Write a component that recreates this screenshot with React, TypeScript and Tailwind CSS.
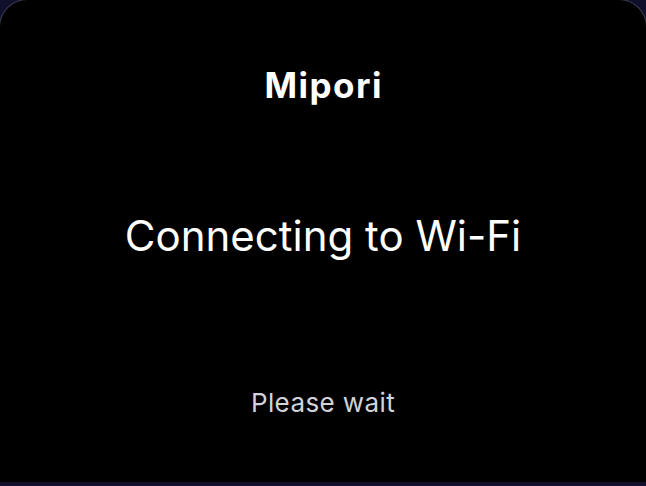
import React from "react";

export default function App() {
  return (
    <div className="w-[646px] h-[486px] bg-[#10102a] overflow-hidden" style={{ fontFamily: "Inter, 'Noto Sans', sans-serif" }}>
      <div className="w-[648px] h-[483px] -ml-px -mt-px bg-black rounded-t-[28px] border border-b-0 border-[#3a3d52] flex flex-col items-center">
        <div className="mt-[64px] h-[42px] leading-[42px] text-[35px] font-bold tracking-[1.5px] pl-[1.5px] text-white">Mipori</div>
        <div className="mt-[106px] h-[48px] leading-[48px] text-[42px] font-normal text-white">Connecting to Wi-Fi</div>
        <div className="mt-[128px] h-[30px] leading-[30px] text-[26px] font-normal tracking-[0.4px] text-[#d1d3da]">Please wait</div>
      </div>
    </div>
  );
}
